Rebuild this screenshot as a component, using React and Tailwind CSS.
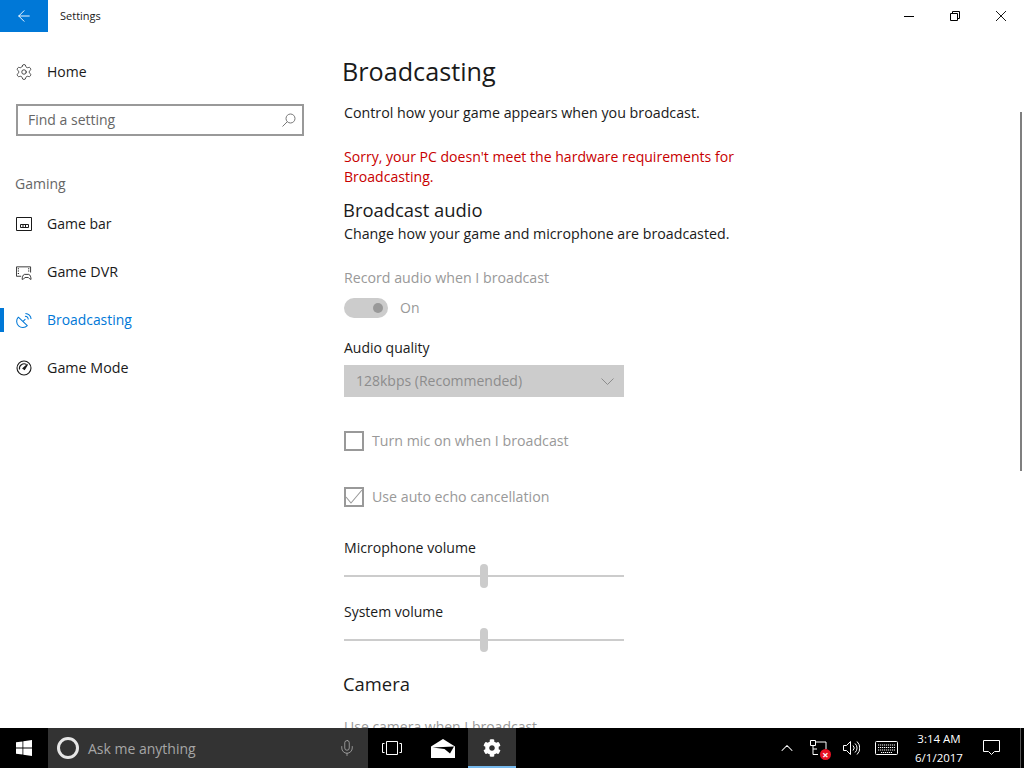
import React from "react";
import { Settings, ArrowLeft, ChevronUp, Mic } from "lucide-react";
import { FaCog } from "react-icons/fa";

const font = "font-['Open_Sans','Noto_Sans',sans-serif]";

function NavItem({ icon, label, active, size }) {
  return (
    <div className={`relative flex h-12 items-center pl-4 ${active ? "text-[#0078d7]" : "text-[#1a1a1a]"}`}>
      {active && <div className="absolute left-0 top-3 h-6 w-1 bg-[#0078d7]" />}
      <div className="flex h-4 w-4 items-center justify-center">{icon}</div>
      <span className={`ml-[15px] leading-5 ${size || "text-[14px]"}`}>{label}</span>
    </div>
  );
}

function Slider({ className }) {
  return (
    <div className={`relative flex h-6 w-[280px] items-center ${className}`}>
      <div className="h-0.5 w-full bg-[#cccccc]" />
      <div className="absolute left-[136px] top-0 h-6 w-2 rounded-full bg-[#cccccc]" />
    </div>
  );
}

function CheckRow({ label, checked, className }) {
  return (
    <div className={`flex h-5 items-center ${className}`}>
      <div className="flex h-5 w-5 items-center justify-center border-2 border-[#999999]">
        {checked && (
          <svg width="16" height="16" viewBox="0 0 16 16" fill="none" stroke="#999999" strokeWidth="1.1">
            <path d="M0 8l5 6L16 1" />
          </svg>
        )}
      </div>
      <span className="ml-2 text-[14.2px] leading-5 text-[#999999]">{label}</span>
    </div>
  );
}

export default function App() {
  return (
    <div className={`flex h-[768px] w-[1024px] flex-col overflow-hidden bg-white ${font}`}>
      <div className="flex h-8 shrink-0 items-center">
        <div className="flex h-8 w-12 items-center justify-center bg-[#0078d7]">
          <ArrowLeft className="h-[18px] w-[18px] text-white" strokeWidth={1.25} />
        </div>
        <span className="ml-3 text-[11px] text-[#1a1a1a]">Settings</span>
        <div className="ml-auto flex h-8">
          <div className="flex w-[46px] items-center justify-center">
            <div className="h-px w-2.5 bg-black" />
          </div>
          <div className="flex w-[46px] items-center justify-center">
            <svg width="10" height="10" viewBox="0 0 10 10" fill="none" stroke="black">
              <path d="M.5 2.500h7v7h-7zM2.500 2.500v-2h7v7h-2" />
            </svg>
          </div>
          <div className="flex w-[46px] items-center justify-center">
            <svg width="10" height="10" viewBox="0 0 10 10" fill="none" stroke="black" strokeWidth="0.9">
              <path d="M0 0l10 10M10 0L0 10" />
            </svg>
          </div>
        </div>
      </div>

      <div className="relative flex min-h-0 flex-1">
        <aside className="w-[320px] shrink-0">
          <div className="flex h-12 items-center pl-[15px] pt-8 text-[#1a1a1a]">
            <Settings className="h-[18px] w-[18px]" strokeWidth={1} />
            <span className="ml-3.5 text-[14px] leading-5">Home</span>
          </div>
          <div className="ml-4 mt-6 flex h-8 w-[288px] items-center border-2 border-[#999999] pl-2.5 pr-1.5">
            <span className="mb-0.5 text-[14px] text-[#666666]">Find a setting</span>
            <svg className="ml-auto" width="14" height="14" viewBox="0 0 14 14" fill="none" stroke="#777777">
              <circle cx="8.500" cy="5.500" r="4.500" />
              <path d="M5.300 8.700L.5 13.500" />
            </svg>
          </div>
          <div className="ml-[15px] mt-[38px] text-[14px] leading-5 text-[#666666]">Gaming</div>
          <div className="mt-1.5">
            <NavItem
              label="Game bar"
              icon={
                <svg width="16" height="16" viewBox="0 0 16 16" fill="none" stroke="currentColor">
                  <path d="M.5 1.500h15v13H.5z" />
                  <path d="M4.500 8.500h8v3h-8zM7 9v2M9.500 9v2" />
                </svg>
              }
            />
            <NavItem
              label="Game DVR"
              size="text-[14.3px]"
              icon={
                <svg width="17" height="17" viewBox="0 0 17 17" fill="none" stroke="currentColor" strokeWidth="0.9">
                  <path d="M5.500 12.500H.5v-10h15v6" />
                  <path d="M2.500 4v1M2.500 6.500v1M2.500 9v1M13.500 4v1M13.500 6.500v1" strokeWidth="1.200" />
                  <path d="M6.500 15.800c0-2 1-5.300 2.500-5.300h4.500c1.500 0 2.500 3.300 2.500 5.300-1.500 0-2.500-2-3-2h-3.500c-.5 0-1 2-2.500 2z" />
                </svg>
              }
            />
            <NavItem
              active
              label="Broadcasting"
              size="text-[13.9px]"
              icon={
                <svg width="17" height="17" viewBox="0 0 17 17" fill="none" stroke="currentColor" strokeWidth="1.100">
                  <path d="M2.500 5a6.500 6.500 0 0 0 9.500 9z" strokeLinejoin="round" />
                  <path d="M7.500 9.500L10 7" />
                  <path d="M9.500 4a3.500 3.500 0 0 1 3.500 3.500M10 1a6 6 0 0 1 6 6" />
                </svg>
              }
            />
            <NavItem
              label="Game Mode"
              size="text-[14.3px]"
              icon={
                <svg width="16" height="16" viewBox="0 0 16 16" fill="none" stroke="currentColor" strokeWidth="1.100">
                  <circle cx="8" cy="8" r="7" />
                  <path d="M3.500 9.500a4.700 4.700 0 0 1 7-5" />
                  <path d="M7 8.500l4.500-4-3 5z" fill="currentColor" />
                </svg>
              }
            />
          </div>
        </aside>

        <main className="min-w-0 flex-1 overflow-hidden pl-6 pt-5">
          <h1 className="-ml-0.5 text-[25.2px] font-normal leading-[38px] text-[#1a1a1a]">Broadcasting</h1>
          <p className="mt-[13px] text-[14.25px] leading-5 text-[#1a1a1a]">Control how your game appears when you broadcast.</p>
          <p className="mt-6 w-[420px] text-[14.07px] leading-5 text-[#c80000]">
            Sorry, your PC doesn't meet the hardware requirements for Broadcasting.
          </p>
          <h2 className="mt-[9px] -ml-px text-[18.4px] font-normal leading-7 text-[#1a1a1a]">Broadcast audio</h2>
          <p className="text-[14.22px] leading-5 text-[#1a1a1a]">Change how your game and microphone are broadcasted.</p>
          <p className="mt-6 text-[14.2px] leading-5 text-[#999999]">Record audio when I broadcast</p>
          <div className="mt-2.5 flex h-5 items-center">
            <div className="flex h-5 w-11 items-center justify-end rounded-full bg-[#cccccc] pr-[5px]">
              <div className="h-2.5 w-2.5 rounded-full bg-[#999999]" />
            </div>
            <span className="mb-0.5 ml-3 text-[14px] text-[#999999]">On</span>
          </div>
          <p className="mt-5 text-[14px] leading-5 text-[#1a1a1a]">Audio quality</p>
          <div className="mt-[7px] flex h-8 w-[280px] items-center bg-[#cccccc] pl-3 pr-2.5">
            <span className="mb-0.5 text-[14px] text-[#8c8c8c]">128kbps (Recommended)</span>
            <svg className="ml-auto" width="13" height="7" viewBox="0 0 13 7" fill="none" stroke="#8c8c8c">
              <path d="M.5 .5l6 6 6-6" />
            </svg>
          </div>
          <CheckRow className="mt-[34px]" label="Turn mic on when I broadcast" />
          <CheckRow className="mt-9" label="Use auto echo cancellation" checked />
          <p className="mt-[31px] text-[14.1px] leading-5 text-[#1a1a1a]">Microphone volume</p>
          <Slider className="mt-1.5" />
          <p className="mt-3.5 text-[14px] leading-5 text-[#1a1a1a]">System volume</p>
          <Slider className="mt-1.5" />
          <h2 className="mt-[18px] -ml-px text-[18.4px] font-normal leading-7 text-[#1a1a1a]">Camera</h2>
          <p className="mt-[19px] text-[14px] leading-5 text-[#999999]">Use camera when I broadcast</p>
        </main>

        <div className="absolute right-0.5 top-20 h-[359px] w-0.5 bg-[#7f7f7f]" />
      </div>

      <footer className="flex h-10 shrink-0 items-center bg-black text-white">
        <div className="flex h-10 w-12 items-center justify-center">
          <svg width="16" height="16" viewBox="0 0 16 16" fill="white">
            <path d="M0 2.300l6.500-.9v6.200H0zM7.300 1.300L16 0v7.600H7.300zM0 8.400h6.500v6.200L0 13.700zM7.300 8.400H16V16l-8.700-1.200z" />
          </svg>
        </div>
        <div className="flex h-10 w-[320px] items-center bg-[#333333] pl-[9px] pr-3">
          <div className="h-[22px] w-[22px] rounded-full border-[3px] border-[#e6e6e6]" />
          <span className="ml-[9px] text-[14px] text-[#a6a6a6]">Ask me anything</span>
          <Mic className="ml-auto h-[18px] w-[18px] text-[#b3b3b3]" strokeWidth={1} />
        </div>
        <div className="flex h-10 w-12 items-center justify-center">
          <svg width="20" height="14" viewBox="0 0 20 14" fill="none" stroke="white">
            <path d="M4.500 .5h11v13h-11zM2.500 2.500H.5v9h2M17.500 2.500h2v9h-2" />
          </svg>
        </div>
        <div className="flex h-10 w-[52px] items-center justify-center pl-0.5">
          <svg width="24" height="19" viewBox="0 0 24 19" fill="white">
            <path d="M0 7.500L12 0l12 7.500V19H0z" />
            <path d="M1.500 8.500L23 7.500l-4 7-5.500-4.500z" fill="black" />
          </svg>
        </div>
        <div className="flex h-10 w-12 items-center justify-center border-b-2 border-[#76b9ed] bg-[#333333] pt-0.5">
          <FaCog className="h-[18px] w-[18px] text-white" />
        </div>
        <div className="ml-auto flex h-10 items-center">
          <ChevronUp className="h-5 w-5 text-white" strokeWidth={1.25} />
          <div className="relative ml-[13px] h-4 w-[18px]">
            <svg width="18" height="16" viewBox="0 0 18 16" fill="none" stroke="white">
              <path d="M.5 .5h5v5h-5zM3 5.500v9h5M3 9h4M5.500 2h10.500v7" />
            </svg>
            <div className="absolute bottom-[-4px] right-[-3px] flex h-[11px] w-[11px] items-center justify-center rounded-full bg-[#e81123] text-[11px] font-bold leading-none text-white">×</div>
          </div>
          <svg className="ml-[15px]" width="17" height="16" viewBox="0 0 17 16" fill="none" stroke="white">
            <path d="M.5 5.500h3l4-4v13l-4-4h-3zM10 5.500a3.500 3.500 0 0 1 0 5M12 3.500a6 6 0 0 1 0 9M14 1.500a9 9 0 0 1 0 13" />
          </svg>
          <svg className="ml-[15px]" width="23" height="14" viewBox="0 0 23 14" fill="none" stroke="white">
            <rect x=".5" y=".5" width="22" height="13" rx="1" />
            <path d="M3 4h17M3 6.500h17M3 9h17M6 11.500h11" strokeDasharray="1.200 .8" />
          </svg>
          <div className="ml-[7px] flex w-[68px] flex-col items-center text-[11.5px] leading-[19px]">
            <span>3:14 AM</span>
            <span>6/1/2017</span>
          </div>
          <svg className="ml-2.5" width="17" height="16" viewBox="0 0 17 16" fill="none" stroke="white">
            <path d="M.5 .5h16v11h-5l-3 3-3-3h-5z" />
          </svg>
          <div className="ml-5 h-10 w-px bg-[#555555]" />
          <div className="w-[3px]" />
        </div>
      </footer>
    </div>
  );
}
